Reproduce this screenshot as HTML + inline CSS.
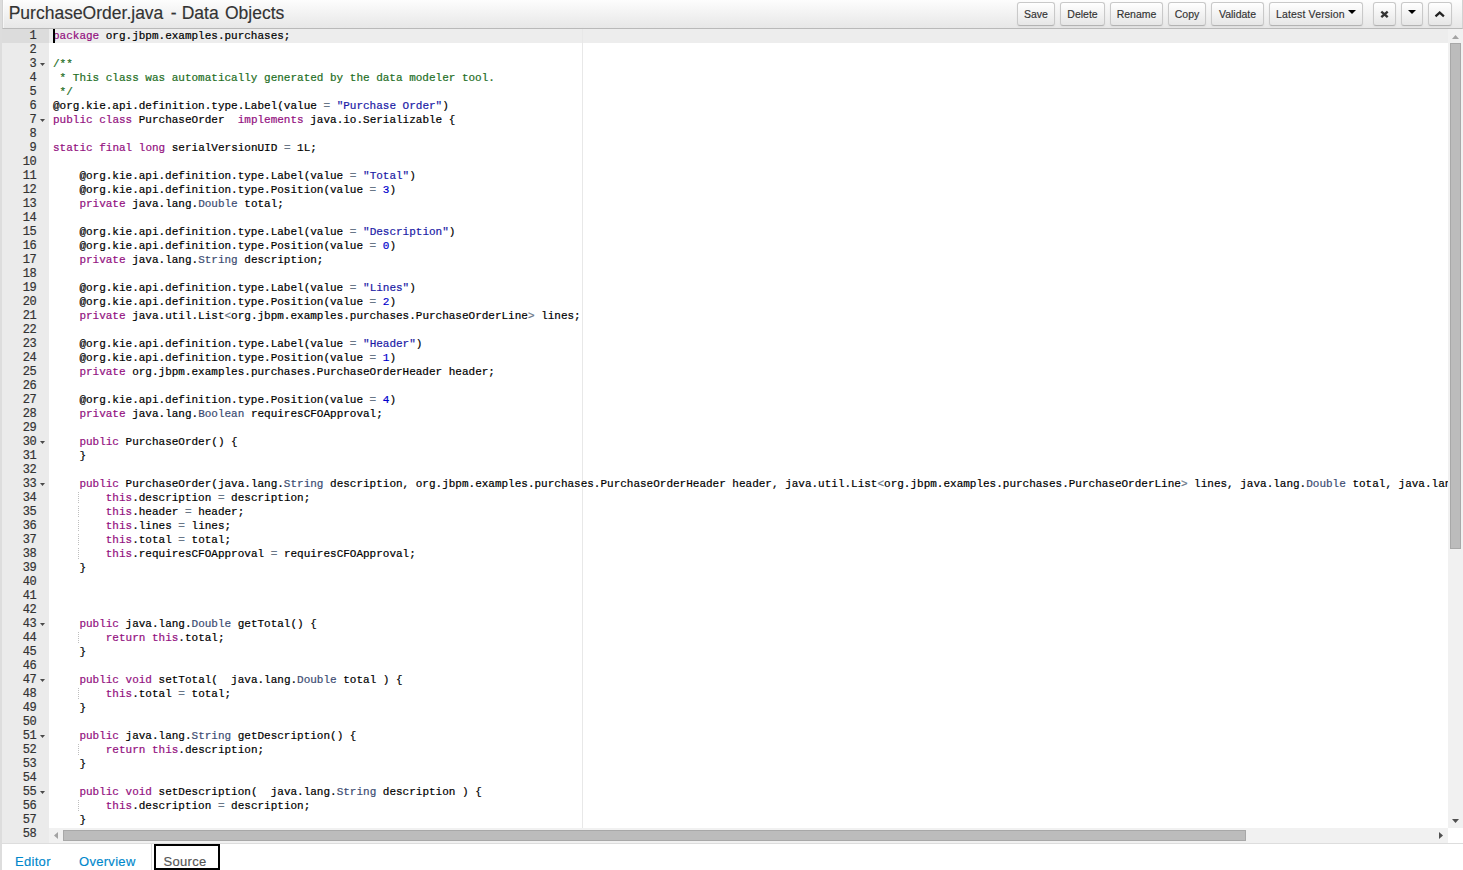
<!DOCTYPE html>
<html>
<head>
<meta charset="utf-8">
<title>PurchaseOrder.java - Data Objects</title>
<style>
html,body{margin:0;padding:0;}
body{width:1463px;height:870px;overflow:hidden;background:#fff;position:relative;font-family:"Liberation Sans",sans-serif;color:#333;}
#strip{position:absolute;left:0;top:0;width:2px;height:870px;background:#dddddd;}
#hdr{position:absolute;left:2px;top:0;width:1459px;height:28px;border-left:1px solid #d2d2d2;border-right:1px solid #d2d2d2;border-bottom:1px solid #b9b9b9;background:linear-gradient(to bottom,#fdfdfd 0%,#e7e7e7 100%);box-shadow:inset 1px 0 0 rgba(255,255,255,.55);}
#title{position:absolute;left:5.7px;top:3px;word-spacing:1.4px;-webkit-text-stroke:0.15px;font-size:17.5px;line-height:20px;color:#333;white-space:nowrap;}
.btn{position:absolute;top:2px;height:22px;box-sizing:content-box;border:1px solid #c9c9c9;border-bottom-color:#b3b3b3;border-radius:3px;background:linear-gradient(to bottom,#ffffff,#e6e6e6);font-size:10.5px;line-height:23px;color:#333;text-align:center;white-space:nowrap;-webkit-text-stroke:0.15px;box-shadow:inset 0 1px 0 rgba(255,255,255,.2),0 1px 2px rgba(0,0,0,.05);}
.caret{display:inline-block;width:0;height:0;border-left:4px solid transparent;border-right:4px solid transparent;border-top:4px solid #000;vertical-align:top;}
.btn svg{position:absolute;}
#ed{position:absolute;left:2px;top:29px;width:1461px;height:814px;background:#fff;overflow:hidden;font-family:"Liberation Mono",monospace;font-size:11px;line-height:14px;color:#000;}
#gut{position:absolute;left:0;top:0;width:47px;height:814px;background:#ebebeb;color:#333;overflow:hidden;font-size:12px;letter-spacing:-0.6px;-webkit-text-stroke:0.2px;}
.gc{height:14px;width:34px;text-align:right;position:relative;white-space:pre;}
.gc b{font-weight:normal;}
.gc.act{background:#dcdcdc;width:34px;padding-right:13px;}
.fw{position:absolute;left:38px;top:6px;width:5px;height:3px;background:#4a4a4a;clip-path:polygon(0 0,100% 0,50% 100%);}
#sc{position:absolute;left:47px;top:0;width:1399px;height:814px;overflow:hidden;}
#al{position:absolute;left:0;top:0;width:1399px;height:14px;background:rgba(0,0,0,0.07);}
#pm{position:absolute;left:533px;top:0;width:1px;height:814px;background:#e8e8e8;}
#cur{position:absolute;left:4px;top:0;width:2px;height:14px;background:#000;}
#txt{position:absolute;left:4px;top:0;-webkit-text-stroke:0.2px;letter-spacing:-0.0055px;}
.ln{height:14px;white-space:pre;position:relative;}
.ig{position:absolute;left:25px;top:1px;width:1px;height:11px;background:repeating-linear-gradient(to bottom,#bfbfbf 0,#bfbfbf 1px,transparent 1px,transparent 2px);}
.k{color:rgb(147,15,128);}
.s{color:#1A1AA6;}
.n{color:rgb(0,0,205);}
.t{color:rgb(60,76,114);}
.o{color:rgb(104,118,135);}
.c{color:#236e24;}
#vs{position:absolute;left:1446px;top:0;width:15px;height:799px;background:#f1f1f1;}
#vt{position:absolute;left:2px;top:14px;width:9px;height:504px;background:#bcbcbc;border:1px solid #a8a8a8;}
#hs{position:absolute;left:47px;top:799px;width:1399px;height:15px;background:#f1f1f1;}
#ht{position:absolute;left:14px;top:2px;width:1181px;height:9px;background:#bcbcbc;border:1px solid #a8a8a8;}
.ar{position:absolute;}
#tabs{position:absolute;left:2px;top:843px;width:1461px;height:27px;border-top:1px solid #ddd;background:#fff;font-size:13px;}
.tab{position:absolute;top:10px;line-height:15px;letter-spacing:0.3px;-webkit-text-stroke:0.15px;color:#0088cc;white-space:nowrap;}
#tabl{position:absolute;left:149px;top:0;width:1px;height:27px;background:#ddd;}
#focus{position:absolute;left:152px;top:0;width:62px;height:22px;border:2px solid #000;}
</style>
</head>
<body>
<div id="strip"></div>
<div id="hdr">
  <div id="title">PurchaseOrder.java <span style="position:relative;left:1px;">-</span> Data Objects</div>
  <div class="btn" style="left:1014px;width:36px;">Save</div>
  <div class="btn" style="left:1057px;width:43px;">Delete</div>
  <div class="btn" style="left:1107px;width:51px;">Rename</div>
  <div class="btn" style="left:1165px;width:36px;">Copy</div>
  <div class="btn" style="left:1208px;width:51px;">Validate</div>
  <div class="btn" style="left:1266px;width:92px;text-align:left;"><span style="margin-left:6px;letter-spacing:0.15px;">Latest Version</span><span class="caret" style="position:absolute;left:78px;top:7px;"></span></div>
  <div class="btn" style="left:1370px;width:21px;"><svg style="left:6px;top:7.4px;" width="9" height="8" viewBox="0 0 9 8"><path d="M1.3 1.6 L7.7 7.1 M7.7 1.6 L1.3 7.1" stroke="#333" stroke-width="2.4" fill="none"/></svg></div>
  <div class="btn" style="left:1398px;width:20px;"><span class="caret" style="position:absolute;left:6px;top:7px;"></span></div>
  <div class="btn" style="left:1425px;width:22px;"><svg style="left:5.4px;top:7.4px;" width="11" height="8" viewBox="0 0 11 8"><path d="M1.5 6.4 L5.7 2.6 L9.9 6.4" stroke="#222" stroke-width="2.2" fill="none"/></svg></div>
</div>
<div id="ed">
  <div id="gut">
<div class="gc act"><b>1</b></div>
<div class="gc"><b>2</b></div>
<div class="gc"><b>3</b><i class="fw"></i></div>
<div class="gc"><b>4</b></div>
<div class="gc"><b>5</b></div>
<div class="gc"><b>6</b></div>
<div class="gc"><b>7</b><i class="fw"></i></div>
<div class="gc"><b>8</b></div>
<div class="gc"><b>9</b></div>
<div class="gc"><b>10</b></div>
<div class="gc"><b>11</b></div>
<div class="gc"><b>12</b></div>
<div class="gc"><b>13</b></div>
<div class="gc"><b>14</b></div>
<div class="gc"><b>15</b></div>
<div class="gc"><b>16</b></div>
<div class="gc"><b>17</b></div>
<div class="gc"><b>18</b></div>
<div class="gc"><b>19</b></div>
<div class="gc"><b>20</b></div>
<div class="gc"><b>21</b></div>
<div class="gc"><b>22</b></div>
<div class="gc"><b>23</b></div>
<div class="gc"><b>24</b></div>
<div class="gc"><b>25</b></div>
<div class="gc"><b>26</b></div>
<div class="gc"><b>27</b></div>
<div class="gc"><b>28</b></div>
<div class="gc"><b>29</b></div>
<div class="gc"><b>30</b><i class="fw"></i></div>
<div class="gc"><b>31</b></div>
<div class="gc"><b>32</b></div>
<div class="gc"><b>33</b><i class="fw"></i></div>
<div class="gc"><b>34</b></div>
<div class="gc"><b>35</b></div>
<div class="gc"><b>36</b></div>
<div class="gc"><b>37</b></div>
<div class="gc"><b>38</b></div>
<div class="gc"><b>39</b></div>
<div class="gc"><b>40</b></div>
<div class="gc"><b>41</b></div>
<div class="gc"><b>42</b></div>
<div class="gc"><b>43</b><i class="fw"></i></div>
<div class="gc"><b>44</b></div>
<div class="gc"><b>45</b></div>
<div class="gc"><b>46</b></div>
<div class="gc"><b>47</b><i class="fw"></i></div>
<div class="gc"><b>48</b></div>
<div class="gc"><b>49</b></div>
<div class="gc"><b>50</b></div>
<div class="gc"><b>51</b><i class="fw"></i></div>
<div class="gc"><b>52</b></div>
<div class="gc"><b>53</b></div>
<div class="gc"><b>54</b></div>
<div class="gc"><b>55</b><i class="fw"></i></div>
<div class="gc"><b>56</b></div>
<div class="gc"><b>57</b></div>
<div class="gc"><b>58</b></div>
  </div>
  <div id="sc">
    <div id="al"></div>
    <div id="pm"></div>
    <div id="txt">
<div class="ln"><span class="k">package</span> org.jbpm.examples.purchases;</div>
<div class="ln"></div>
<div class="ln"><span class="c">/**</span></div>
<div class="ln"><span class="c"> * This class was automatically generated by the data modeler tool.</span></div>
<div class="ln"><span class="c"> */</span></div>
<div class="ln">@org.kie.api.definition.type.Label(value <span class="o">=</span> <span class="s">&quot;Purchase Order&quot;</span>)</div>
<div class="ln"><span class="k">public</span> <span class="k">class</span> PurchaseOrder  <span class="k">implements</span> java.io.Serializable {</div>
<div class="ln"></div>
<div class="ln"><span class="k">static</span> <span class="k">final</span> <span class="k">long</span> serialVersionUID <span class="o">=</span> 1L;</div>
<div class="ln"></div>
<div class="ln">    @org.kie.api.definition.type.Label(value <span class="o">=</span> <span class="s">&quot;Total&quot;</span>)</div>
<div class="ln">    @org.kie.api.definition.type.Position(value <span class="o">=</span> <span class="n">3</span>)</div>
<div class="ln">    <span class="k">private</span> java.lang.<span class="t">Double</span> total;</div>
<div class="ln"></div>
<div class="ln">    @org.kie.api.definition.type.Label(value <span class="o">=</span> <span class="s">&quot;Description&quot;</span>)</div>
<div class="ln">    @org.kie.api.definition.type.Position(value <span class="o">=</span> <span class="n">0</span>)</div>
<div class="ln">    <span class="k">private</span> java.lang.<span class="t">String</span> description;</div>
<div class="ln"></div>
<div class="ln">    @org.kie.api.definition.type.Label(value <span class="o">=</span> <span class="s">&quot;Lines&quot;</span>)</div>
<div class="ln">    @org.kie.api.definition.type.Position(value <span class="o">=</span> <span class="n">2</span>)</div>
<div class="ln">    <span class="k">private</span> java.util.List<span class="o">&lt;</span>org.jbpm.examples.purchases.PurchaseOrderLine<span class="o">&gt;</span> lines;</div>
<div class="ln"></div>
<div class="ln">    @org.kie.api.definition.type.Label(value <span class="o">=</span> <span class="s">&quot;Header&quot;</span>)</div>
<div class="ln">    @org.kie.api.definition.type.Position(value <span class="o">=</span> <span class="n">1</span>)</div>
<div class="ln">    <span class="k">private</span> org.jbpm.examples.purchases.PurchaseOrderHeader header;</div>
<div class="ln"></div>
<div class="ln">    @org.kie.api.definition.type.Position(value <span class="o">=</span> <span class="n">4</span>)</div>
<div class="ln">    <span class="k">private</span> java.lang.<span class="t">Boolean</span> requiresCFOApproval;</div>
<div class="ln"></div>
<div class="ln">    <span class="k">public</span> PurchaseOrder() {</div>
<div class="ln">    }</div>
<div class="ln"></div>
<div class="ln">    <span class="k">public</span> PurchaseOrder(java.lang.<span class="t">String</span> description, org.jbpm.examples.purchases.PurchaseOrderHeader header, java.util.List<span class="o">&lt;</span>org.jbpm.examples.purchases.PurchaseOrderLine<span class="o">&gt;</span> lines, java.lang.<span class="t">Double</span> total, java.lang.<span class="t">Boolean</span> requiresCFOApproval) {</div>
<div class="ln"><i class="ig"></i>        <span class="k">this</span>.description <span class="o">=</span> description;</div>
<div class="ln"><i class="ig"></i>        <span class="k">this</span>.header <span class="o">=</span> header;</div>
<div class="ln"><i class="ig"></i>        <span class="k">this</span>.lines <span class="o">=</span> lines;</div>
<div class="ln"><i class="ig"></i>        <span class="k">this</span>.total <span class="o">=</span> total;</div>
<div class="ln"><i class="ig"></i>        <span class="k">this</span>.requiresCFOApproval <span class="o">=</span> requiresCFOApproval;</div>
<div class="ln">    }</div>
<div class="ln"></div>
<div class="ln"></div>
<div class="ln"></div>
<div class="ln">    <span class="k">public</span> java.lang.<span class="t">Double</span> getTotal() {</div>
<div class="ln"><i class="ig"></i>        <span class="k">return</span> <span class="k">this</span>.total;</div>
<div class="ln">    }</div>
<div class="ln"></div>
<div class="ln">    <span class="k">public</span> <span class="k">void</span> setTotal(  java.lang.<span class="t">Double</span> total ) {</div>
<div class="ln"><i class="ig"></i>        <span class="k">this</span>.total <span class="o">=</span> total;</div>
<div class="ln">    }</div>
<div class="ln"></div>
<div class="ln">    <span class="k">public</span> java.lang.<span class="t">String</span> getDescription() {</div>
<div class="ln"><i class="ig"></i>        <span class="k">return</span> <span class="k">this</span>.description;</div>
<div class="ln">    }</div>
<div class="ln"></div>
<div class="ln">    <span class="k">public</span> <span class="k">void</span> setDescription(  java.lang.<span class="t">String</span> description ) {</div>
<div class="ln"><i class="ig"></i>        <span class="k">this</span>.description <span class="o">=</span> description;</div>
<div class="ln">    }</div>
<div class="ln"></div>
    </div>
    <div id="cur"></div>
  </div>
  <div id="vs">
    <div class="ar" style="left:4px;top:6px;width:7px;height:4px;background:#a3a3a3;clip-path:polygon(50% 0,100% 100%,0 100%);"></div>
    <div id="vt"></div>
    <div class="ar" style="left:4px;top:790px;width:7px;height:4px;background:#505050;clip-path:polygon(0 0,100% 0,50% 100%);"></div>
  </div>
  <div id="hs">
    <div class="ar" style="left:5px;top:4px;width:4px;height:7px;background:#a3a3a3;clip-path:polygon(100% 0,100% 100%,0 50%);"></div>
    <div id="ht"></div>
    <div class="ar" style="left:1390px;top:4px;width:4px;height:7px;background:#505050;clip-path:polygon(0 0,100% 50%,0 100%);"></div>
  </div>
</div>
<div id="tabs">
  <div id="tabl"></div>
  <div class="tab" style="left:13px;">Editor</div>
  <div class="tab" style="left:77px;">Overview</div>
  <div id="focus"></div>
  <div class="tab" style="left:161.6px;color:#555;">Source</div>
</div>
</body>
</html>
